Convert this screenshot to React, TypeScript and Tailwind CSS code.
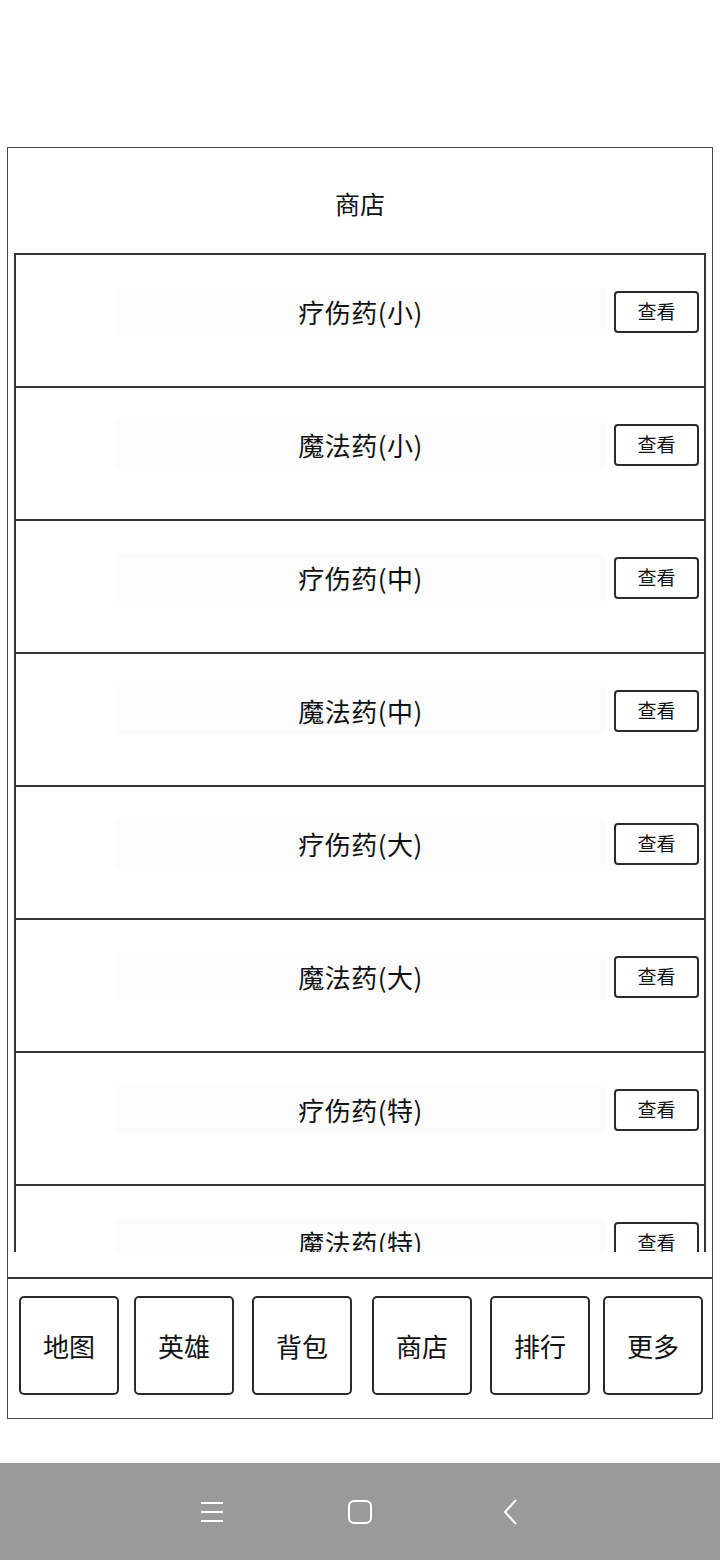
const items = [
  '疗伤药(小)',
  '魔法药(小)',
  '疗伤药(中)',
  '魔法药(中)',
  '疗伤药(大)',
  '魔法药(大)',
  '疗伤药(特)',
  '魔法药(特)',
];

const tabs = ['地图', '英雄', '背包', '商店', '排行', '更多'];

function ShopRow({ name }: { name: string }) {
  return (
    <div className="h-[133px] shrink-0 border-b-2 border-[#333] pt-[33px]">
      <div className="flex items-center pl-[100px] pr-[5px]">
        <div className="flex h-[47px] flex-1 items-center justify-center bg-[#fcfcfc] text-[26px] tracking-[0.5px] text-[#111]">
          {name}
        </div>
        <button className="ml-[9px] flex h-[42px] w-[85px] items-center justify-center rounded-[4px] border-2 border-[#2a2a2a] bg-white text-[19px] text-[#111]">
          查看
        </button>
      </div>
    </div>
  );
}

export default function App() {
  return (
    <div className="flex h-[1560px] w-[720px] flex-col bg-white font-['Noto_Sans_CJK_SC',sans-serif]">
      <div className="h-[147px] shrink-0" />

      <div className="mx-[7px] flex h-[1272px] shrink-0 flex-col border border-[#444]">
        <div className="flex h-[105px] shrink-0 items-center justify-center pt-[7px] text-[25px] text-[#111]">
          商店
        </div>

        <div className="mx-[6px] flex h-[999px] shrink-0 flex-col overflow-hidden border-x-2 border-t-2 border-[#333]">
          {items.map((name) => (
            <ShopRow key={name} name={name} />
          ))}
        </div>

        <div className="h-[25px] shrink-0" />

        <div className="flex flex-1 items-start border-t-2 border-[#333] pl-[11px] pt-[17px]">
          {tabs.map((t, i) => (
            <button
              key={t}
              className={
                'flex h-[99px] w-[100px] shrink-0 items-center justify-center rounded-[5px] border-2 border-[#2a2a2a] bg-white text-[26px] text-[#111] ' +
                ['', 'ml-[15px]', 'ml-[18px]', 'ml-[20px]', 'ml-[18px]', 'ml-[13px]'][i]
              }
            >
              {t}
            </button>
          ))}
        </div>
      </div>

      <div className="h-[44px] shrink-0" />

      {/* system navigation bar */}
      <div className="flex flex-1 items-center justify-center bg-[#9a9a9a]">
        <div className="flex w-[320px] items-center justify-between pr-[2px]">
          <svg width="24" height="24" viewBox="0 0 24 24" fill="none" stroke="white" strokeWidth="2">
            <path d="M1 3h22M1 12h22M1 21h22" />
          </svg>
          <svg width="26" height="26" viewBox="0 0 26 26" fill="none" stroke="white" strokeWidth="2" className="-ml-[6px]">
            <rect x="2" y="2" width="22" height="22" rx="5" />
          </svg>
          <svg width="16" height="26" viewBox="0 0 16 26" fill="none" stroke="white" strokeWidth="2">
            <path d="M14 1 3 13l11 12" />
          </svg>
        </div>
      </div>
    </div>
  );
}
